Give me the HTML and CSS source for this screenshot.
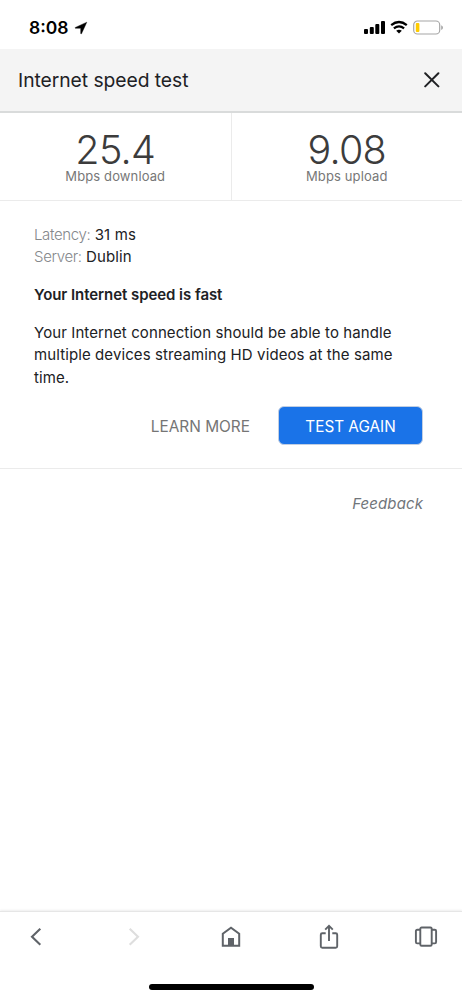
FILE: index.html
```html
<!DOCTYPE html>
<html lang="en">
<head>
<meta charset="utf-8">
<title>Internet speed test</title>
<link rel="stylesheet" href="styles.css">
</head>
<body>
<div class="status">
  <span class="clock">8:08</span>
  <svg class="loc" width="14" height="14" viewBox="0 0 14 14"><path d="M12.8 1.2 1.4 6.4c-.5.3-.3.9.1.9h5.2v5.2c0 .5.7.6.9.1z" fill="#000" stroke="#000" stroke-width=".4"/></svg>
  <svg class="signals" width="80" height="16" viewBox="0 0 80 16">
    <rect x="0" y="9" width="4" height="5" rx="1"/><rect x="5.8" y="7" width="4" height="7" rx="1"/><rect x="11.3" y="4" width="4" height="10" rx="1"/><rect x="17" y="1" width="4" height="13" rx="1"/>
    <path d="M27.2 5.1Q35 -1.1 42.8 5.1M29.9 8.4Q35 4.4 40.1 8.4" fill="none" stroke="#000" stroke-width="2.3"/>
    <path d="M32.2 10.8Q35 8.7 37.8 10.8L35 13.6z"/>
    <rect x="49.7" y="1" width="26" height="13" rx="3.8" fill="none" stroke="#a6a6a6" stroke-width="1.2"/>
    <rect x="51.8" y="3" width="3.6" height="9" rx="1" fill="#ffcc00"/>
    <path d="M77.2 5.3q1.8.6 1.8 2.3t-1.8 2.3z" fill="#a6a6a6"/>
  </svg>
</div>
<header class="header">
  <h1>Internet speed test</h1>
  <svg width="16" height="16" viewBox="0 0 16 16"><path d="M1.2 1.2l13.2 13.2M14.4 1.2L1.2 14.4" stroke="#202124" stroke-width="2" stroke-linecap="round"/></svg>
</header>
<section class="speeds">
  <div class="speed"><div class="value">25.4</div><div class="unit">Mbps download</div></div>
  <div class="speed"><div class="value">9.08</div><div class="unit">Mbps upload</div></div>
</section>
<main class="details">
  <div class="row"><span class="label">Latency:</span> <span class="result">31 ms</span></div>
  <div class="row"><span class="label">Server:</span> <span class="result">Dublin</span></div>
  <h2>Your Internet speed is fast</h2>
  <p>Your Internet connection should be able to handle<br>multiple devices streaming HD videos at the same<br>time.</p>
  <div class="actions"><span class="more">LEARN MORE</span><span class="again">TEST AGAIN</span></div>
</main>
<div class="feedback"><span>Feedback</span></div>
<nav class="toolbar">
  <div class="icons">
    <svg width="24" height="28" viewBox="0 0 24 28"><path d="M16.3 5.7 8 13.7l8.3 8.1" fill="none" stroke="#5f6368" stroke-width="2.1"/></svg>
    <svg width="24" height="28" viewBox="0 0 24 28"><path d="M7.7 5.7 16 13.7l-8.3 8.1" fill="none" stroke="#dedede" stroke-width="2.1"/></svg>
    <svg width="24" height="28" viewBox="0 0 24 28"><path d="M3.8 22.8V10.7L12 4.7l8.2 6v12.1z" fill="none" stroke="#5f6368" stroke-width="2"/><path d="M9 15h6v8H9z" fill="#5f6368"/></svg>
    <svg width="24" height="28" viewBox="0 0 24 28"><path d="M8.7 10.2H5.3q-1.5 0-1.5 1.5v11.6q0 1.5 1.5 1.5h13.4q1.5 0 1.5-1.5V11.7q0-1.5-1.5-1.5h-3.4M12 18V3.7M8.2 6.7 12 2.9l3.8 3.8" fill="none" stroke="#5f6368" stroke-width="1.9"/></svg>
    <svg width="24" height="28" viewBox="0 0 24 28"><g fill="none" stroke="#5f6368" stroke-width="1.9"><rect x="6.3" y="4.5" width="11.4" height="18.2" rx="1.3"/><path d="M6 6.8H3.2q-1.3 0-1.3 1.3v11q0 1.3 1.3 1.3H6M18 6.8h2.8q1.3 0 1.3 1.3v11q0 1.3-1.3 1.3H18"/></g></svg>
  </div>
  <div class="home-bar"></div>
</nav>
</body>
</html>
```
FILE: styles.css
```css
* { box-sizing: border-box; }
body { margin: 0; height: 999px; display: flex; flex-direction: column; background: #fff; color: #202124; font-family: Inter, "Liberation Sans", sans-serif; font-size: 15px; white-space: nowrap; overflow: hidden; }
h1, h2, p { margin: 0; font-weight: 400; }
.status { height: 49px; flex: none; display: flex; align-items: center; padding: 6px 18px 0 29px; color: #000; }
.clock { font-size: 17.5px; font-weight: 600; width: 40px; }
.loc { margin-left: 5px; }
.signals { margin-left: auto; }
.header { height: 64px; flex: none; display: flex; align-items: center; justify-content: space-between; padding: 0 22px 0 18px; background: #f4f4f4; border-bottom: 2px solid #d9dbdb; }
.header h1 { font-size: 19.3px; letter-spacing: -.05px; }
.speeds { display: flex; height: 88px; flex: none; border-bottom: 1px solid #ebebeb; }
.speed { flex: 1; text-align: center; padding-top: 19px; }
.speed + .speed { border-left: 1px solid #ebebeb; }
.value { font-size: 39.5px; line-height: 37px; font-weight: 300; color: #3c3c3c; letter-spacing: -.7px; }
.unit { font-size: 13px; line-height: 14px; color: #777; letter-spacing: .12px; }
.details { flex: none; height: 268px; padding: 23px 39px 0 34px; border-bottom: 1px solid #ebebeb; }
.row { line-height: 22px; }
.label { color: #85888b; font-weight: 300; letter-spacing: -.35px; }
.result { letter-spacing: .15px; }
h2 { font-size: 15px; font-weight: 600; line-height: 22px; margin-top: 16px; letter-spacing: -.06px; }
p { line-height: 22.3px; margin-top: 16px; letter-spacing: .1px; }
.actions { display: flex; justify-content: flex-end; align-items: center; margin-top: 17px; color: #757575; }
.more { margin-right: 28px; padding-top: 2px; font-size: 15.4px; }
.again { width: 145px; height: 39px; border: 1px solid #c1cee2; border-radius: 6px; background: #1a73e8; color: #fff; text-align: center; line-height: 39px; font-size: 15.3px; }
.feedback { text-align: right; padding: 25px 39px 0; line-height: 20px; font-style: italic; color: #70757a; letter-spacing: .1px; }
.toolbar { margin-top: auto; height: 88px; border-top: 1px solid #e6e6e6; box-shadow: 0 -1px 2px #eee; padding-top: 11px; }
.icons { display: flex; justify-content: space-between; padding: 0 24px; }
.icons svg { display: block; }
.home-bar { width: 165px; height: 6px; margin: 33px auto 0; border-radius: 3px; background: #000; }
```
